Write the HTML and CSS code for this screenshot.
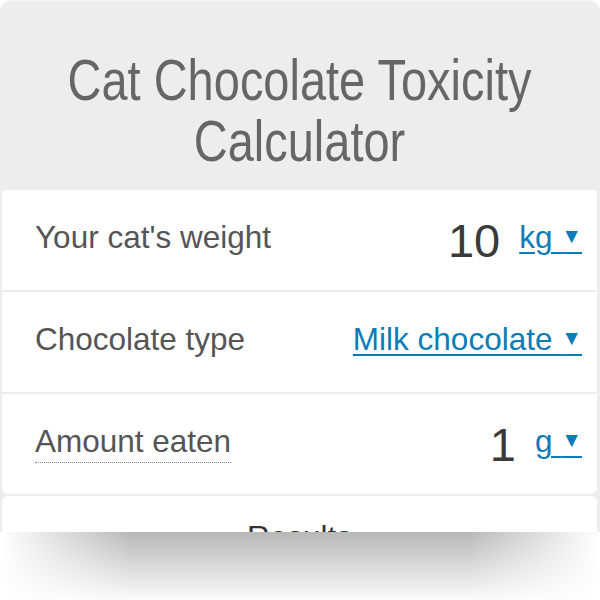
FILE: index.html
```html
<!DOCTYPE html>
<html lang="en">
<head>
    <meta charset="UTF-8">
    <meta name="viewport" content="width=device-width, initial-scale=1.0">
    <title>Cat Chocolate Toxicity Calculator</title>
    <link rel="stylesheet" href="styles.css">
</head>
<body>
    <div class="calc">
        <h1 class="calc-title">Cat Chocolate Toxicity<br>Calculator</h1>
        <div class="rows">
            <div class="row">
                <span class="label">Your cat's weight</span>
                <span class="value">10</span>
                <span class="unit">kg <span class="arrow">▼</span></span>
            </div>
            <div class="row">
                <span class="label">Chocolate type</span>
                <span class="unit">Milk chocolate <span class="arrow">▼</span></span>
            </div>
            <div class="row">
                <span class="label"><span class="hint">Amount eaten</span></span>
                <span class="value">1</span>
                <span class="unit">g <span class="arrow">▼</span></span>
            </div>
        </div>
        <div class="results">
            <div class="results-title">Results</div>
        </div>
    </div>
    <div class="fade"></div>
</body>
</html>
```

FILE: styles.css
```css
body {margin: 0; background: #ffffff; font-family: "Liberation Sans", Arial, sans-serif;}
.calc {background: #ededed; border-radius: 12px 12px 0 0; padding: 0 3px 0 2px; box-shadow: inset 0 1px 0 #f6f6f6;}
.calc-title {margin: 0; padding: 49px 0 19px; font-size: 58px; font-weight: normal; line-height: 61px; color: #666666; text-align: center; transform: scaleX(0.81);}

.rows {display: flex; flex-direction: column; gap: 2px;}
.row {display: flex; align-items: center; height: 100px; box-sizing: border-box; padding: 0 15px 6px 33px; background: #ffffff; font-size: 31.5px;}
.rows .row:first-child {border-radius: 4px 4px 0 0;}
.rows .row:last-child {border-radius: 0 0 6px 6px;}
.label {flex: 1; color: #555555;}
.hint {border-bottom: 1px dotted #888888; padding-bottom: 3px;}
.value {font-size: 47px; color: #3a3a3a; margin: 6px 19px 0 0;}
.unit {color: #0b7cb8; text-decoration: underline; text-decoration-thickness: 2px; text-underline-offset: 4px;}
.arrow {font-size: 21px; vertical-align: 5px;}

.results {margin-top: 2px; height: 36px; overflow: hidden; background: #ffffff; border-radius: 6px 6px 0 0;}
.results-title {padding-top: 23px; font-size: 31.5px; color: #333333; text-align: center;}

.fade {height: 68px; background: linear-gradient(to bottom, #b8b8b8, #fbfbfb);
    -webkit-mask-image: linear-gradient(to right, transparent, #000 130px, #000 470px, transparent);
    mask-image: linear-gradient(to right, transparent, #000 130px, #000 470px, transparent);}
```
